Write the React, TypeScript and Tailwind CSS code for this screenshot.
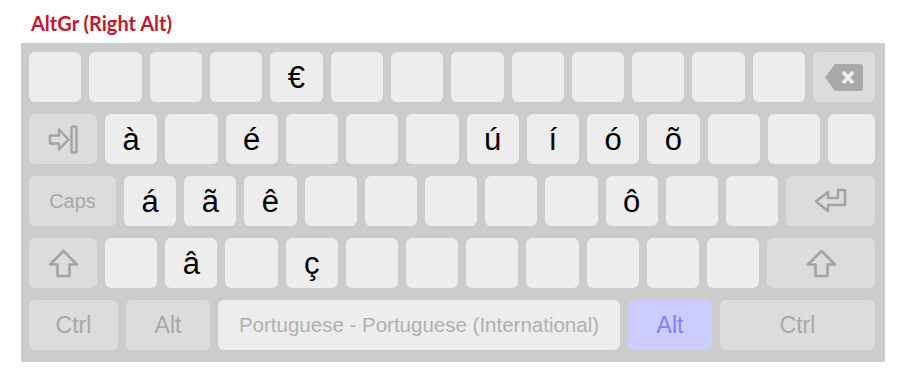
const LIGHT = "bg-[#ededed]";
const MOD = "bg-[#dcdcdc] text-[#a8a8a8]";

function Key({ ch, className = "flex-1" }: { ch?: string; className?: string }) {
  return (
    <div
      className={`${className} ${LIGHT} flex h-[50px] items-center justify-center rounded-[6px] text-[31px] leading-none text-black`}
    >
      {ch}
    </div>
  );
}

function Mod({
  w,
  children,
  className = "",
}: {
  w: string;
  children?: React.ReactNode;
  className?: string;
}) {
  return (
    <div
      className={`${w} ${className || MOD} flex h-[50px] shrink-0 items-center justify-center rounded-[6px]`}
    >
      {children}
    </div>
  );
}

function Backspace() {
  return (
    <svg width="38" height="27" viewBox="0 0 38 27">
      <path d="M10 0H35a3 3 0 0 1 3 3V24a3 3 0 0 1-3 3H10L0 13.5Z" fill="#a9a9a9" />
      <path d="M18 8L28 19M28 8L18 19" stroke="#eeeeee" strokeWidth="3.6" />
    </svg>
  );
}

function TabIcon() {
  return (
    <svg width="31" height="29" viewBox="0 0 31 29" fill="none" stroke="#a3a3a3" strokeWidth="2.5" strokeLinejoin="round">
      <path d="M2 10.5H11V4.5L20.5 14.5L11 24.5V18.5H2Z" />
      <rect x="23.5" y="1.5" width="5" height="26" rx="1.5" />
    </svg>
  );
}

function EnterIcon() {
  return (
    <svg width="33" height="26" viewBox="0 0 33 26" fill="none" stroke="#a3a3a3" strokeWidth="2.5" strokeLinejoin="round">
      <path d="M24 2H31V17H14V23L2 13.5L14 4V10H24Z" />
    </svg>
  );
}

function ShiftIcon() {
  return (
    <svg width="31" height="29" viewBox="0 0 31 29" fill="none" stroke="#a3a3a3" strokeWidth="2.6" strokeLinejoin="round">
      <path d="M15.5 2L29 15.5H21.5V27H9.5V15.5H2Z" />
    </svg>
  );
}

export default function App() {
  const row1 = ["", "", "", "", "€", "", "", "", "", "", "", "", ""];
  const row2 = ["à", "", "é", "", "", "", "ú", "í", "ó", "õ", "", ""];
  const row3 = ["á", "ã", "ê", "", "", "", "", "", "ô", "", ""];
  const row4 = ["", "â", "", "ç", "", "", "", "", "", "", ""];

  return (
    <div className="min-h-[387px] bg-white pl-[21px] pt-[8px]" style={{ fontFamily: "'Liberation Sans', Arial, sans-serif" }}>
      <div className="ml-[10px] h-[35px] text-[20px] font-bold text-[#c0182e]" style={{ fontFamily: "Lato, 'Open Sans', sans-serif" }}>
        AltGr (Right Alt)
      </div>
      <div className="flex w-[864px] flex-col gap-[12px] bg-[#cccccc] pb-[12px] pl-[8px] pr-[10px] pt-[9px]">
        <div className="flex gap-[8px]">
          {row1.map((c, i) => (
            <Key key={i} ch={c} />
          ))}
          <Mod w="w-[62px]">
            <Backspace />
          </Mod>
        </div>

        <div className="flex gap-[8px]">
          <Mod w="w-[68px]">
            <TabIcon />
          </Mod>
          {row2.map((c, i) => (
            <Key key={i} ch={c} />
          ))}
          <Key className="w-[47px] shrink-0" />
        </div>

        <div className="flex gap-[8px]">
          <Mod w="w-[87px]">
            <span className="text-[20px]">Caps</span>
          </Mod>
          {row3.map((c, i) => (
            <Key key={i} ch={c} />
          ))}
          <Mod w="w-[89px]">
            <EnterIcon />
          </Mod>
        </div>

        <div className="flex gap-[8px]">
          <Mod w="w-[68px]">
            <ShiftIcon />
          </Mod>
          {row4.map((c, i) => (
            <Key key={i} ch={c} />
          ))}
          <Mod w="w-[108px]">
            <ShiftIcon />
          </Mod>
        </div>

        <div className="flex gap-[8px]">
          <Mod w="w-[89px]">
            <span className="text-[23px]">Ctrl</span>
          </Mod>
          <Mod w="w-[84px]">
            <span className="text-[23px]">Alt</span>
          </Mod>
          <div className="flex h-[50px] flex-1 items-center justify-center rounded-[6px] bg-[#ededed] text-[20.5px] text-[#b0b0b0]">
            Portuguese - Portuguese (International)
          </div>
          <Mod w="w-[84px]" className="bg-[#ccccff] text-[#8080ff]">
            <span className="text-[23px]">Alt</span>
          </Mod>
          <Mod w="w-[155px]">
            <span className="text-[23px]">Ctrl</span>
          </Mod>
        </div>
      </div>
    </div>
  );
}
